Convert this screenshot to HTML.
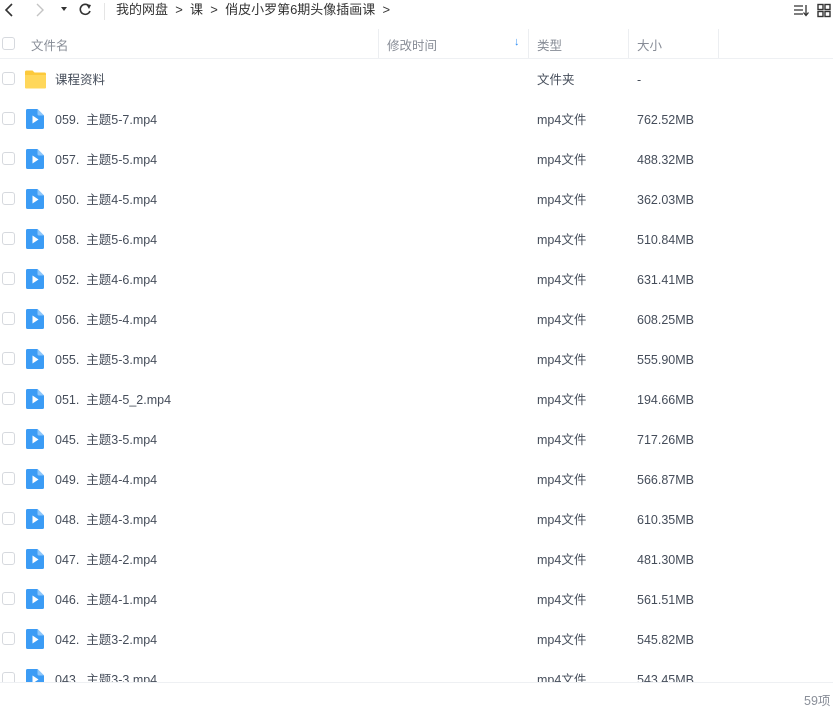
<!DOCTYPE html><html><head><meta charset="utf-8"><style>
*{margin:0;padding:0;box-sizing:border-box}
body{width:833px;height:708px;overflow:hidden;background:#fff;font-family:"Liberation Sans","Noto Sans CJK SC",sans-serif;font-size:12.5px;color:#454d5a;position:relative}
.a{position:absolute;white-space:nowrap}
.cb{position:absolute;left:2px;width:13px;height:13px;border:1px solid #d6d9de;border-radius:3px;background:#fff}
.hd{position:absolute;top:29px;left:0;width:833px;height:30px;border-bottom:1px solid #eef0f3}
.vl{position:absolute;top:29px;height:29px;width:1px;background:#eceef1}
.row{position:absolute;left:0;width:833px;height:40px}
.row .t{position:absolute;top:14px;line-height:15px}
</style></head><body>
<svg class="a" style="left:0;top:0" width="140" height="24">
<path d="M12 4 L6 10 L12 16" stroke="#333" stroke-width="1.6" fill="none"/>
<path d="M37 4 L43 10 L37 16" stroke="#c4c4c4" stroke-width="1.4" fill="none"/>
<path d="M61 7 L67 7 L64 11 Z" fill="#333"/>
<path d="M89 6 A5 5 0 1 0 90 11" stroke="#333" stroke-width="1.6" fill="none"/><path d="M86 4 L91 5 L89 9 Z" fill="#333"/>
<rect x="104" y="3" width="1" height="17" fill="#e5e5e5"/>
</svg>
<div class="a" style="left:116px;top:2px;font-size:13px;color:#333;line-height:16px">我的网盘 &nbsp;&gt;&nbsp; 课 &nbsp;&gt;&nbsp; 俏皮小罗第6期头像插画课 &nbsp;&gt;</div>
<svg class="a" style="left:793px;top:3px" width="40" height="16">
<path d="M1 3h9M1 7h9M1 11h9" stroke="#333" stroke-width="1.3"/><path d="M13 2v10M10.5 9.5l2.5 3 2.5-3" stroke="#333" stroke-width="1.3" fill="none"/>
<rect x="25" y="1.5" width="5" height="5" stroke="#333" fill="none" stroke-width="1.4"/><rect x="25" y="8.5" width="5" height="5" stroke="#333" fill="none" stroke-width="1.4"/><rect x="32" y="1.5" width="5" height="5" stroke="#333" fill="none" stroke-width="1.4"/><rect x="32" y="8.5" width="5" height="5" stroke="#333" fill="none" stroke-width="1.4"/>
</svg>
<div class="hd"></div>
<div class="cb" style="top:37px"></div>
<div class="vl" style="left:378px"></div><div class="vl" style="left:528px"></div><div class="vl" style="left:628px"></div><div class="vl" style="left:718px"></div>
<div class="a" style="left:31px;top:35px;color:#878c96">文件名</div>
<div class="a" style="left:387px;top:35px;color:#878c96">修改时间</div>
<div class="a" style="left:514px;top:36px;color:#2f8ef4;font-size:11px;font-weight:bold">↓</div>
<div class="a" style="left:537px;top:35px;color:#878c96">类型</div>
<div class="a" style="left:637px;top:35px;color:#878c96">大小</div>
<div id="rows"></div>
<div class="a" style="left:0;top:682px;width:833px;height:1px;background:#eef0f3"></div>
<div class="a" style="left:0;top:683px;width:833px;height:25px;background:#fff"></div>
<div class="a" style="left:804px;top:690px;color:#8a8f99">59项</div>
<script>
var d=[["课程资料","文件夹","-"],["059.&nbsp;&nbsp;主题5-7.mp4","mp4文件","762.52MB"],["057.&nbsp;&nbsp;主题5-5.mp4","mp4文件","488.32MB"],["050.&nbsp;&nbsp;主题4-5.mp4","mp4文件","362.03MB"],["058.&nbsp;&nbsp;主题5-6.mp4","mp4文件","510.84MB"],["052.&nbsp;&nbsp;主题4-6.mp4","mp4文件","631.41MB"],["056.&nbsp;&nbsp;主题5-4.mp4","mp4文件","608.25MB"],["055.&nbsp;&nbsp;主题5-3.mp4","mp4文件","555.90MB"],["051.&nbsp;&nbsp;主题4-5_2.mp4","mp4文件","194.66MB"],["045.&nbsp;&nbsp;主题3-5.mp4","mp4文件","717.26MB"],["049.&nbsp;&nbsp;主题4-4.mp4","mp4文件","566.87MB"],["048.&nbsp;&nbsp;主题4-3.mp4","mp4文件","610.35MB"],["047.&nbsp;&nbsp;主题4-2.mp4","mp4文件","481.30MB"],["046.&nbsp;&nbsp;主题4-1.mp4","mp4文件","561.51MB"],["042.&nbsp;&nbsp;主题3-2.mp4","mp4文件","545.82MB"],["043.&nbsp;&nbsp;主题3-3.mp4","mp4文件","543.45MB"]];
var h="";d.forEach(function(r,i){var top=59+i*40;
var ic=i==0?'<svg class="a" style="left:25px;top:11px" width="21" height="19"><path d="M0 2a1.5 1.5 0 0 1 1.5-1.5h6l2 2h10a1.5 1.5 0 0 1 1.5 1.5v13a1.5 1.5 0 0 1-1.5 1.5h-18A1.5 1.5 0 0 1 0 17z" fill="#fcc93b"/><path d="M0 5h21v12a1.5 1.5 0 0 1-1.5 1.5h-18A1.5 1.5 0 0 1 0 17z" fill="#ffd75a"/></svg>':'<svg class="a" style="left:26px;top:10px" width="18" height="20"><path d="M1.5 0h10l6.5 6.5v12a1.5 1.5 0 0 1-1.5 1.5h-15A1.5 1.5 0 0 1 0 18.5v-17A1.5 1.5 0 0 1 1.5 0z" fill="#3c9cf5"/><path d="M11.5 0v5a1.5 1.5 0 0 0 1.5 1.5h5z" fill="#8cc6fb"/><path d="M6.5 6.5l6 4-6 4z" fill="#fff"/></svg>';
h+='<div class="row" style="top:'+top+'px"><div class="cb" style="top:13px"></div>'+ic+'<div class="t" style="left:55px">'+r[0]+'</div><div class="t" style="left:537px">'+r[1]+'</div><div class="t" style="left:637px">'+r[2]+'</div></div>';});
document.getElementById("rows").innerHTML=h;
</script>
</body></html>
